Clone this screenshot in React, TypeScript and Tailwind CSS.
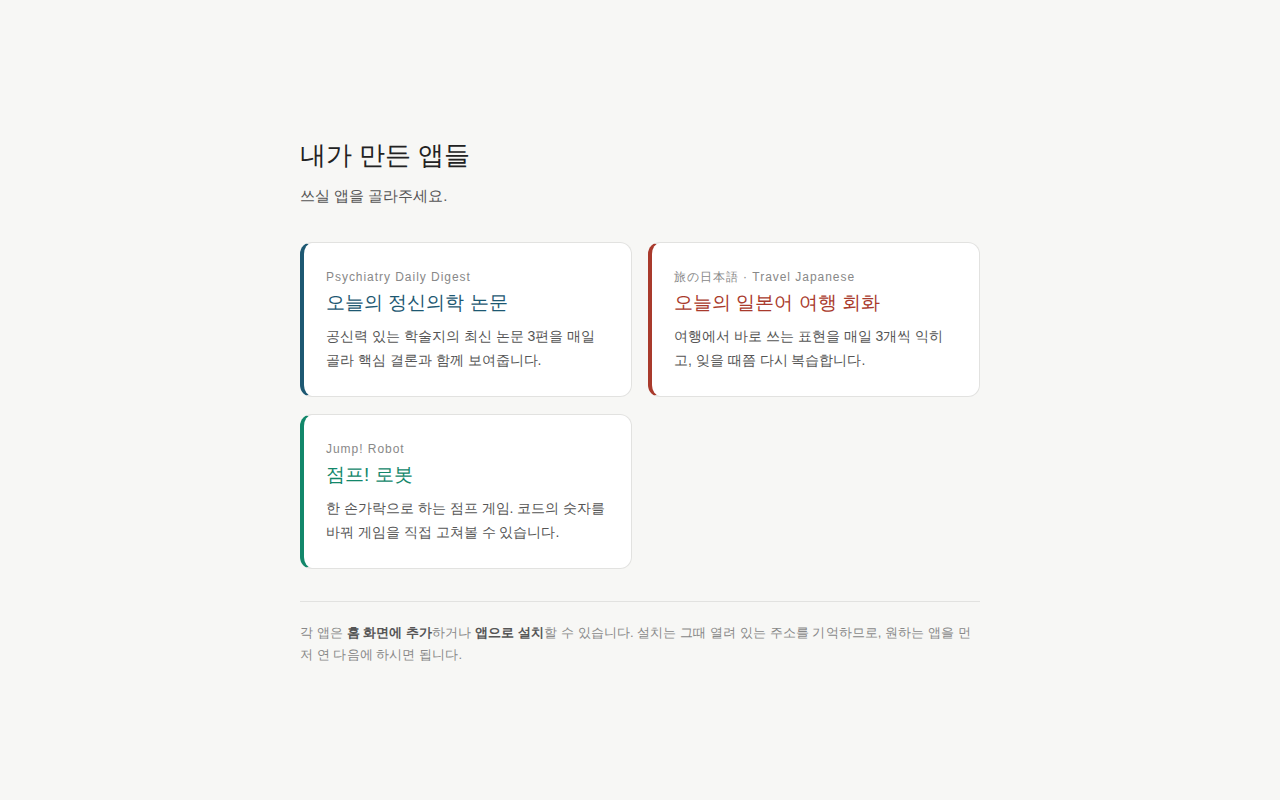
const apps = [
  {
    label: "Psychiatry Daily Digest",
    title: "오늘의 정신의학 논문",
    desc: "공신력 있는 학술지의 최신 논문 3편을 매일 골라 핵심 결론과 함께 보여줍니다.",
    accent: "border-l-[#1d5872]",
    color: "text-[#1d5872]",
  },
  {
    label: "旅の日本語 · Travel Japanese",
    title: "오늘의 일본어 여행 회화",
    desc: "여행에서 바로 쓰는 표현을 매일 3개씩 익히고, 잊을 때쯤 다시 복습합니다.",
    accent: "border-l-[#a93a2c]",
    color: "text-[#a93a2c]",
  },
  {
    label: "Jump! Robot",
    title: "점프! 로봇",
    desc: "한 손가락으로 하는 점프 게임. 코드의 숫자를 바꿔 게임을 직접 고쳐볼 수 있습니다.",
    accent: "border-l-[#12876a]",
    color: "text-[#12876a]",
  },
];

export default function App() {
  return (
    <div
      className="min-h-screen bg-[#f7f7f5] text-[#222]"
      style={{ fontFamily: '"Liberation Sans", sans-serif' }}
    >
      <main className="mx-auto w-[680px] pt-[136px]">
        <h1 className="text-[26px] leading-[38px] font-normal text-[#222]">내가 만든 앱들</h1>
        <p className="mt-[11px] text-[15px] leading-[22px] text-[#555]">쓰실 앱을 골라주세요.</p>

        <div className="mt-[35px] grid grid-cols-2 gap-x-4 gap-y-[17px]">
          {apps.map((app) => (
            <a
              key={app.title}
              href="#"
              className={`block rounded-xl border border-[#e2e2e0] border-l-4 ${app.accent} bg-white pl-[22px] pr-5 pt-[25px] pb-[24px]`}
            >
              <div className="text-[12px] leading-[18px] tracking-[0.08em] text-[#888]">{app.label}</div>
              <div className={`mt-1 text-[19px] leading-[26px] ${app.color}`}>{app.title}</div>
              <p className="mt-[9px] text-[14px] leading-[23.5px] text-[#555]">{app.desc}</p>
            </a>
          ))}
        </div>

        <footer className="mt-[32px] border-t border-[#e2e2e0] pt-[20px] text-[13px] leading-[22px] tracking-[0.005em] text-[#888]">
          각 앱은 <strong className="font-bold text-[#555]">홈 화면에 추가</strong>하거나{" "}
          <strong className="font-bold text-[#555]">앱으로 설치</strong>할 수 있습니다. 설치는 그때 열려 있는 주소를
          기억하므로, 원하는 앱을 먼저 연 다음에 하시면 됩니다.
        </footer>
      </main>
    </div>
  );
}
